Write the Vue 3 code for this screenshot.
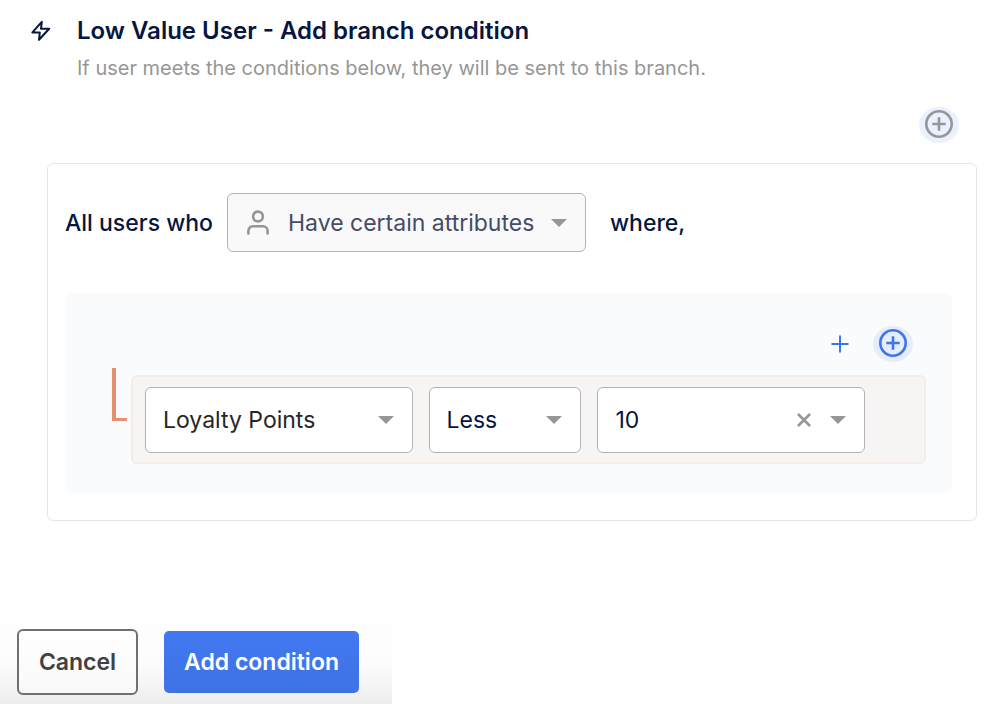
<script setup>
import { ref } from 'vue'

const audience = ref('Have certain attributes')
const attribute = ref('Loyalty Points')
const comparison = ref('Less')
const amount = ref('10')
</script>

<template>
  <main class="page">
    <header class="header">
      <svg class="bolt" viewBox="0 0 20 22" aria-hidden="true">
        <path d="M10.8 1.8 1.4 12.4h7.4l-.8 7.4 10.2-11h-8.2z" />
      </svg>
      <div>
        <h1 class="title">Low Value User - Add branch condition</h1>
        <p class="subtitle">If user meets the conditions below, they will be sent to this branch.</p>
      </div>
    </header>

    <div class="toolbar">
      <button class="round muted" type="button" aria-label="Add group">
        <svg viewBox="0 0 28 28"><circle cx="14" cy="14" r="12.7" /><path d="M14 7.3v13.4M7.3 14h13.4" /></svg>
      </button>
    </div>

    <section class="card">
      <div class="sentence">
        <label for="audience">All users who</label>
        <div class="field audience">
          <svg class="person" viewBox="0 0 22 26" aria-hidden="true">
            <circle cx="11" cy="6.5" r="4.9" />
            <path d="M1.4 23.4v-2.6a4.6 4.6 0 0 1 4.6-4.6h10a4.6 4.6 0 0 1 4.6 4.6v2.6" />
          </svg>
          <select id="audience" v-model="audience"><option>Have certain attributes</option></select>
          <svg class="caret" viewBox="0 0 16 8" aria-hidden="true"><path d="M0 0h16L8 8z" /></svg>
        </div>
        <span class="where">where,</span>
      </div>

      <div class="panel">
        <div class="actions">
          <button class="plus" type="button" aria-label="Add condition row">
            <svg viewBox="0 0 18 18"><path d="M9 .5v17M.5 9h17" /></svg>
          </button>
          <button class="round active" type="button" aria-label="Add nested group">
            <svg viewBox="0 0 28 28"><circle cx="14" cy="14" r="12.7" /><path d="M14 7.3v13.4M7.3 14h13.4" /></svg>
          </button>
        </div>
        <div class="branch">
          <span class="elbow"></span>
          <div class="row">
            <div class="field dark">
              <select v-model="attribute" aria-label="Attribute"><option>Loyalty Points</option></select>
              <svg class="caret" viewBox="0 0 16 8" aria-hidden="true"><path d="M0 0h16L8 8z" /></svg>
            </div>
            <div class="field">
              <select v-model="comparison" aria-label="Comparison"><option>Less</option></select>
              <svg class="caret" viewBox="0 0 16 8" aria-hidden="true"><path d="M0 0h16L8 8z" /></svg>
            </div>
            <div class="field">
              <select v-model="amount" aria-label="Value"><option>10</option></select>
              <button class="clear" type="button" aria-label="Clear value" @click="amount = ''">
                <svg viewBox="0 0 14 14"><path d="m1 1 12 12M13 1 1 13" /></svg>
              </button>
              <svg class="caret" viewBox="0 0 16 8" aria-hidden="true"><path d="M0 0h16L8 8z" /></svg>
            </div>
          </div>
        </div>
      </div>
    </section>

    <footer class="footer">
      <button class="cancel" type="button">Cancel</button>
      <button class="submit" type="button">Add condition</button>
    </footer>
  </main>
</template>

<style>
body {
  margin: 0;
  background: #fff;
}
</style>

<style scoped>
* {
  box-sizing: border-box;
}
.page {
  display: flex;
  flex-direction: column;
  min-height: 100vh;
  font-family: Inter, "Liberation Sans", sans-serif;
  font-size: 23px;
  color: #06163f;
}
button,
select {
  font: inherit;
  color: inherit;
  margin: 0;
}
button {
  display: flex;
  align-items: center;
  justify-content: center;
  padding: 0;
  border: 0;
  background: none;
  cursor: pointer;
}
svg {
  display: block;
  flex: none;
}
.header {
  display: flex;
  gap: 26px;
  padding: 16px 30px 0 31px;
}
.bolt {
  width: 20px;
  height: 22px;
  margin-top: 4px;
  fill: none;
  stroke: #06163f;
  stroke-width: 2;
  stroke-linejoin: round;
}
.title {
  margin: 0;
  font-size: 24px;
  line-height: 30px;
  font-weight: 600;
}
.subtitle {
  margin: 8px 0 0;
  font-size: 20px;
  line-height: 28px;
  color: #969696;
}
.toolbar {
  display: flex;
  justify-content: flex-end;
  padding: 25px 45px 0 0;
}
.round {
  width: 40px;
  height: 36px;
  padding-bottom: 2px;
  border-radius: 50%;
}
.round svg {
  width: 28px;
  height: 28px;
  fill: none;
  stroke: currentColor;
  stroke-width: 2.6;
}
.muted {
  color: #969696;
  background: #eaf0fd;
}
.active {
  color: #3e75ee;
  background: #e7ecfb;
}
.card {
  margin: 20px 27px 0 47px;
  padding: 29px 24px 27px 17px;
  border: 1px solid #e5e5e5;
  border-radius: 6px;
}
.sentence {
  display: flex;
  align-items: center;
  font-weight: 500;
}
.field {
  display: flex;
  position: relative;
  align-items: center;
  min-width: 0;
  height: 66px;
  border: 1px solid #b2b2b9;
  border-radius: 6px;
  background: #fff;
}
.field select {
  flex: 1;
  min-width: 0;
  height: 100%;
  padding: 0 44px 0 17px;
  border: 0;
  appearance: none;
  background: transparent;
}
.caret {
  position: absolute;
  right: 18px;
  width: 16px;
  height: 8px;
  fill: #969696;
  pointer-events: none;
}
.dark {
  color: #262626;
}
.audience {
  height: 59px;
  margin: 0 24px 0 14px;
  background: #f9f9f9;
  color: #464b64;
  font-weight: 400;
}
.audience select {
  padding: 0 50px 0 60px;
}
.person {
  position: absolute;
  left: 19px;
  width: 22px;
  height: 26px;
  fill: none;
  stroke: #969696;
  stroke-width: 2.6;
  stroke-linecap: round;
}
.panel {
  margin-top: 41px;
  padding: 33px 26px 29px 47px;
  border-radius: 6px;
  background: #fafbfd;
}
.actions {
  display: flex;
  align-items: center;
  justify-content: flex-end;
  gap: 24px;
  padding-right: 13px;
}
.plus svg {
  width: 18px;
  height: 18px;
  stroke: #3e75ee;
  stroke-width: 2;
}
.branch {
  display: flex;
  align-items: flex-start;
  gap: 4px;
  margin-top: 13px;
}
.elbow {
  width: 15px;
  height: 53px;
  margin-top: -7px;
  border: solid #e5906f;
  border-width: 0 0 3px 4px;
}
.row {
  display: grid;
  flex: 1;
  grid-template-columns: 7fr 4fr 7fr;
  gap: 16px;
  padding: 10px 59px 9px 12px;
  border: 2px solid #f7ebe6;
  border-radius: 6px;
  background: #f7f5f4;
}
.clear {
  position: absolute;
  right: 45px;
  width: 30px;
  height: 30px;
}
.clear svg {
  width: 14px;
  height: 14px;
  stroke: #969696;
  stroke-width: 2.6;
}
.footer {
  display: flex;
  align-items: center;
  gap: 26px;
  width: 392px;
  margin-top: auto;
  padding: 24px 17px 9px;
  background: linear-gradient(#fff, #fcfcfc 60%, #ededed);
  font-size: 23px;
  font-weight: 600;
}
.cancel {
  width: 121px;
  height: 66px;
  border: 2px solid #707070;
  border-radius: 6px;
  background: linear-gradient(#fff, #f9f9f9);
  color: #404040;
}
.submit {
  width: 195px;
  height: 62px;
  border-radius: 5px;
  background: linear-gradient(#4279f0, #3e72e5);
  color: #fff;
}
</style>
